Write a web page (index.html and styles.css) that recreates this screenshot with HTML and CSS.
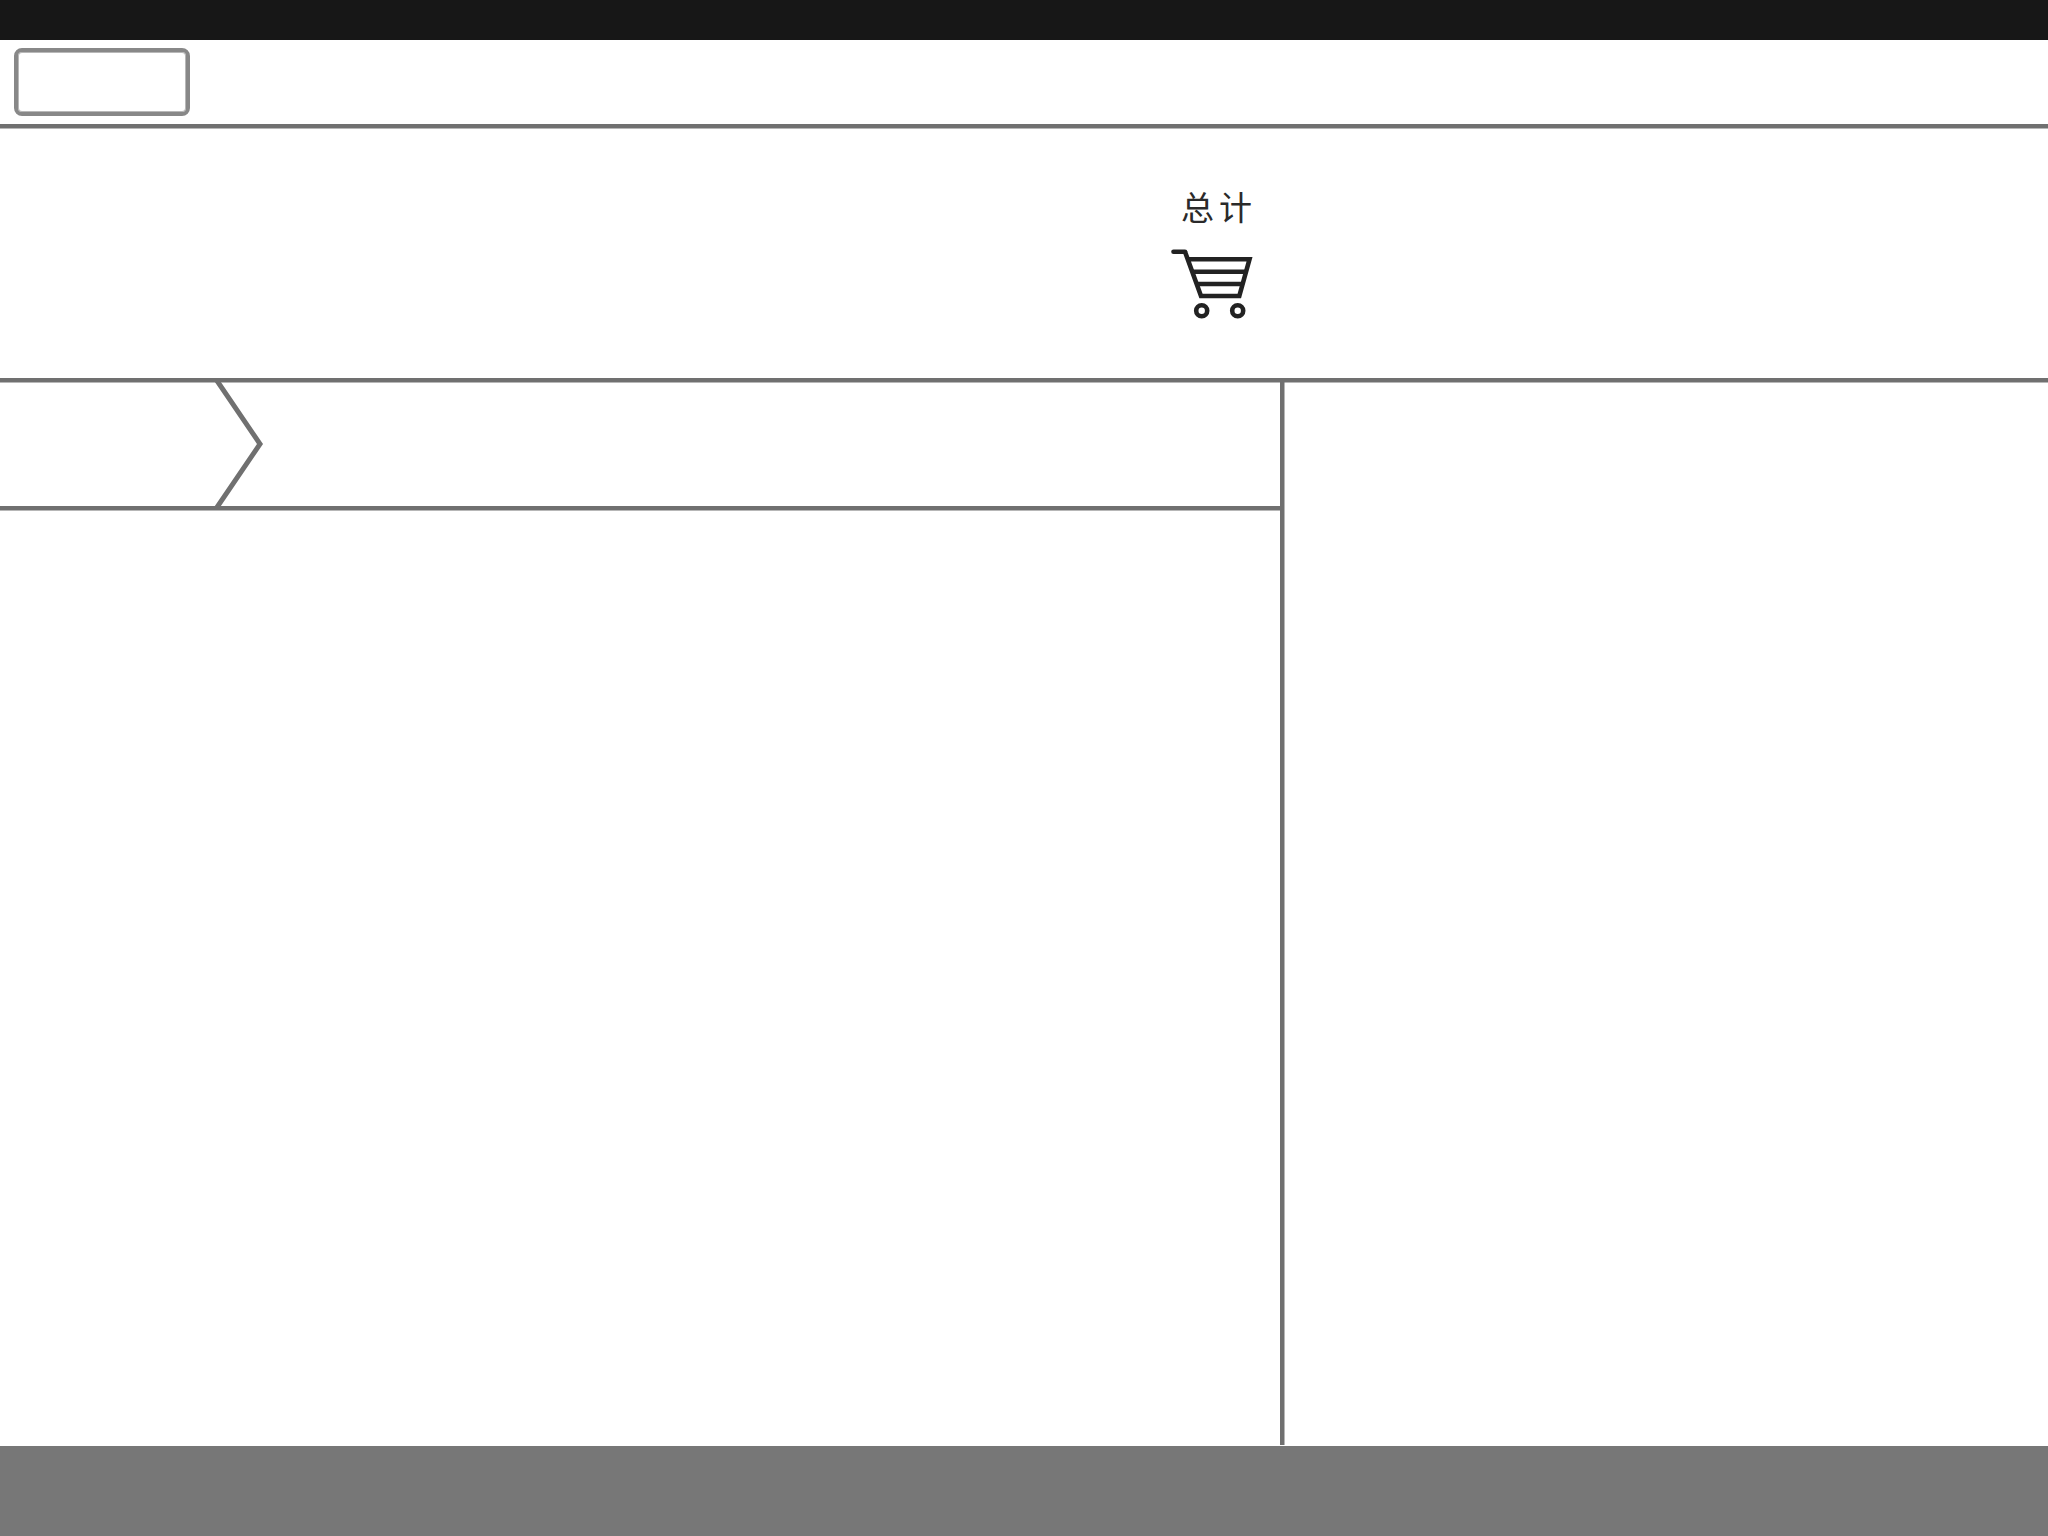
FILE: index.html
```html
<!DOCTYPE html>
<html lang="zh-CN">
<head>
    <meta charset="UTF-8">
    <meta name="viewport" content="width=device-width, initial-scale=1.0">
    <title>总计</title>
    <link rel="stylesheet" href="styles.css">
</head>
<body>
    <div class="top-bar"></div>
    <div class="toolbar">
        <button class="tool-btn" type="button"></button>
    </div>
    <div class="summary">
        <div class="total">
            <div class="total-label">总计</div>
            <svg class="cart" width="84" height="76" viewBox="0 0 84 76" fill="none" stroke="#222" stroke-width="4.6">
                <path d="M3.5 6.7H15" stroke-linecap="round"/>
                <path d="M15 6.7L31 51H69.3L79.5 14.3H17.5"/>
                <path d="M21 26.7H75M26 39H72"/>
                <circle cx="31.7" cy="65.7" r="5.5"/>
                <circle cx="67.7" cy="65.7" r="5.5"/>
            </svg>
        </div>
    </div>
    <div class="main">
        <div class="left-col">
            <div class="step-bar">
                <div class="step"></div>
                <svg class="chevron" width="56" height="124" viewBox="0 0 56 124" fill="none" stroke="#707070" stroke-width="5">
                    <path d="M6.5 -2L50 62L6.5 126"/>
                </svg>
            </div>
        </div>
        <div class="right-col"></div>
    </div>
    <div class="footer"></div>
</body>
</html>
```

FILE: styles.css
```css
html, body {
    height: 100%;
}

body {
    margin: 0;
    display: flex;
    flex-direction: column;
    background-color: #fff;
    font-family: "Liberation Sans", "Noto Sans CJK SC", sans-serif;
}

.top-bar {
    height: 40px;
    background-color: #171717;
}

.toolbar {
    height: 88px;
    padding: 8px 0 0 14px;
    box-sizing: border-box;
    border-bottom: 4px solid #707070;
    box-shadow: 0 1px 0 rgba(112, 112, 112, 0.5);
}

.tool-btn {
    display: block;
    width: 176px;
    height: 68px;
    padding: 0;
    background-color: #fff;
    border: 4px solid #888;
    border-radius: 8px;
    box-shadow: inset 0 0 0 1px rgba(136, 136, 136, 0.6);
}

.summary {
    height: 254px;
    box-sizing: border-box;
    padding: 61px 0 0 1170px;
    border-bottom: 4px solid #707070;
    box-shadow: 0 1px 0 rgba(112, 112, 112, 0.5);
}

.total {
    display: flex;
    flex-direction: column;
}

.total-label {
    padding-left: 11px;
    color: #2a2a2a;
    font-size: 33px;
    line-height: 40px;
    letter-spacing: 5px;
}

.cart {
    display: block;
    margin-top: 16px;
}

.main {
    flex: 1;
    display: flex;
}

.left-col {
    width: 1280px;
    border-right: 4px solid #707070;
    box-shadow: 1px 0 0 rgba(112, 112, 112, 0.5);
}

.step-bar {
    display: flex;
    height: 124px;
    border-bottom: 4px solid #707070;
    box-shadow: 0 1px 0 rgba(112, 112, 112, 0.5);
}

.step {
    width: 210px;
}

.chevron {
    display: block;
}

.right-col {
    flex: 1;
}

.footer {
    height: 90px;
    margin-top: 1px;
    background-color: #777;
}
```
